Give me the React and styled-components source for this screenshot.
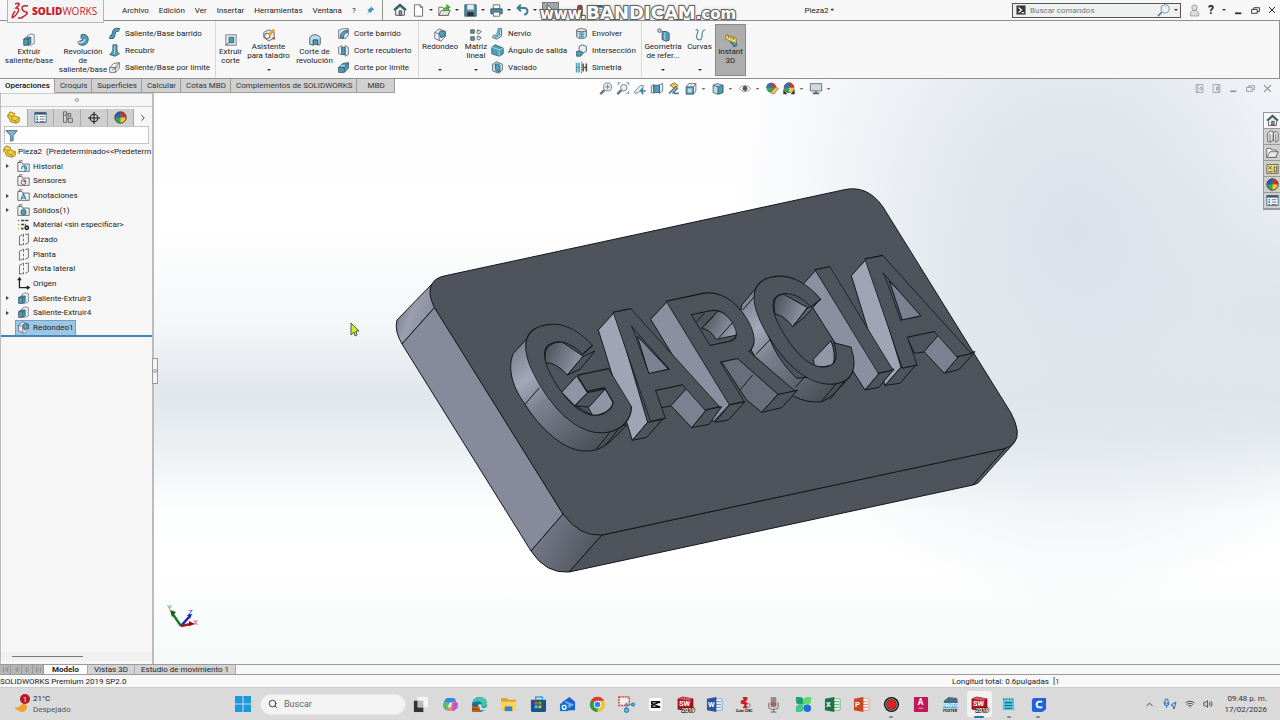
import styled, { createGlobalStyle, css } from 'styled-components'
import { FiSearch } from 'react-icons/fi'
import { LuVolume2, LuWifi, LuChevronUp, LuChevronRight } from 'react-icons/lu'

const GlobalStyle = createGlobalStyle`
  * {
    box-sizing: border-box;
  }

  body {
    margin: 0;
    font-family: Roboto, "Noto Sans", sans-serif;
    font-size: 8px;
    line-height: 9px;
    color: #222;
    overflow: hidden;
  }

  button, input {
    font: inherit;
    color: inherit;
    border: 0;
    padding: 0;
    margin: 0;
    background: none;
  }

  ul {
    list-style: none;
    margin: 0;
    padding: 0;
  }

  svg {
    display: block;
    flex-shrink: 0;
    overflow: visible;
  }
`

const Window = styled.div`
  display: flex;
  flex-direction: column;
  height: 100vh;
  background: #f7f7f7;
`

/* ---------- title bar ---------- */

const TitleBar = styled.header`
  position: relative;
  display: flex;
  align-items: center;
  height: 21px;
  flex-shrink: 0;
  border-bottom: 1px solid #8f8f8f;
`

const Logo = styled.div`
  position: relative;
  z-index: 1;
  align-self: flex-start;
  display: flex;
  align-items: center;
  gap: 3px;
  width: 97px;
  height: 23px;
  margin-left: 7px;
  padding: 0 3px;
  flex-shrink: 0;
  background: #f4f4f4;
  border: 1px solid #b5b5b5;
  border-top: 0;
  color: #c4242c;
  font-family: "Open Sans", sans-serif;
  font-size: 10px;
  white-space: nowrap;

  & b {
    font-weight: 800;
  }
`

const Menu = styled.nav`
  display: flex;
  align-items: center;
  gap: 10px;
  margin-left: 18px;
  padding-right: 7px;
  height: 20px;
  border-right: 1px solid #8f8f8f;
`

const QuickTools = styled.div`
  display: flex;
  align-items: center;
  gap: 5px;
  margin-left: 10px;
`

const QuickItem = styled.span`
  display: flex;
  align-items: center;
  gap: 4px;
`

const PlainButton = styled.button`
  display: flex;
  align-items: center;
  justify-content: center;
  white-space: nowrap;
`

const SelectTool = styled(PlainButton)`
  width: 17px;
  height: 17px;
  background: #a6a6a6;
  border: 1px solid #777;
`

const Watermark = styled.div`
  position: absolute;
  left: 540px;
  top: 4px;
  font-family: "DejaVu Sans", sans-serif;
  font-weight: 700;
  font-size: 15px;
  line-height: 18px;
  color: #fff;
  white-space: nowrap;
  -webkit-text-stroke: 2px #5c5c5c;
  paint-order: stroke fill;
  text-shadow: 0 0 3px #666;

  & span {
    font-size: 18px;
  }
`

const DocTitle = styled.span`
  position: absolute;
  left: 64%;
  transform: translateX(-50%);
`

const TitleRight = styled.div`
  display: flex;
  align-items: center;
  gap: 8px;
  margin-left: auto;
  padding-right: 4px;

  & > b {
    font-size: 12px;
  }
`

const CommandSearch = styled.label`
  display: flex;
  align-items: center;
  gap: 4px;
  width: 169px;
  height: 15px;
  padding: 0 2px 0 3px;
  background: #eef1f0;
  border: 1px solid #555;

  & input {
    flex: 1;
    min-width: 0;
    outline: 0;
  }

  & input::placeholder {
    color: #777;
    opacity: 1;
  }
`

/* ---------- ribbon ---------- */

const Ribbon = styled.section`
  display: flex;
  height: 58px;
  flex-shrink: 0;
  border-bottom: 1px solid #8f8f8f;
  border-right: 1px solid #8f8f8f;
`

const Group = styled.div`
  display: flex;
  padding: 3px 0 2px;

  & + & {
    border-left: 1px solid #d8d8d8;
  }
`

const BigButton = styled.button`
  display: flex;
  flex-direction: column;
  align-items: center;
  width: ${props => props.$width}px;
  padding-top: ${props => props.$menu ? 4 : 9}px;
  position: relative;
  white-space: pre-line;
  text-align: center;

  ${props => props.$active && css`
    background: #adadad;
    border: 1px solid #8a8a8a;
    padding-top: 8px;
  `}
`

const MenuArrow = styled.i`
  width: 0;
  height: 0;
  border: 2px solid transparent;
  border-top-color: #333;
  border-bottom-width: 0;
  ${props => props.$bottom && css`
    position: absolute;
    bottom: 5px;
  `}
`

const SmallList = styled.div`
  display: grid;
  grid-template-rows: repeat(3, 17px);
  width: ${props => props.$width}px;
  padding-top: 1px;
`

const SmallButton = styled.button`
  display: flex;
  align-items: center;
  gap: 4px;
  text-align: left;
  white-space: nowrap;
`

/* ---------- workspace ---------- */

const Workspace = styled.main`
  position: relative;
  display: flex;
  flex-direction: column;
  flex: 1;
  min-height: 0;
  overflow: hidden;
  background:
    radial-gradient(ellipse 340px 380px at 84% 26%, #dbe1ea 0%, #dee4ebcc 40%, transparent 100%),
    radial-gradient(ellipse 300px 160px at 100% 40%, #dfe4eb 0%, transparent 100%),
    linear-gradient(180deg, #fdfdfe 0%, #ffffff 25%, #f4f6f8 42%, #e2e7ec 54%, #ebeff2 62%, #fdfefe 74%, #fff 84%, #f4f9f8 100%);
`

const Tabs = styled.div`
  position: relative;
  z-index: 1;
  display: flex;
  align-self: flex-start;
  flex-shrink: 0;
  height: 14px;
`

const Tab = styled.button`
  padding: 0 ${props => props.$wide ? 9 : 4}px 0 ${props => props.$wide ? 10 : 5}px;
  white-space: nowrap;
  background: #d0d0d0;
  border: 1px solid #9b9b9b;
  border-width: 0 1px 1px 0;
  color: #333;

  ${props => props.$active && css`
    background: #f7f7f7;
    border-bottom-color: #f7f7f7;
    font-weight: 500;
    color: #111;
  `}
`

const Body = styled.div`
  display: flex;
  flex: 1;
  min-height: 0;
`

const SidePanel = styled.aside`
  position: relative;
  display: flex;
  flex-direction: column;
  width: 154px;
  flex-shrink: 0;
  background: #f6f6f6;
  border-left: 1px solid #bbb;
  border-right: 2px solid #bcbcbc;
`

const PanelGrip = styled.div`
  display: grid;
  place-items: center;
  height: 14px;
  margin-bottom: 2px;
  border-top: 1px solid #ccc;
  border-bottom: 1px solid #ccc;
`

const Dot = styled.i`
  width: 4px;
  height: 4px;
  border: 1px solid #999;
  border-radius: 50%;
`

const PanelTabs = styled.div`
  display: flex;
  height: 17px;
`

const PanelTab = styled.button`
  display: grid;
  place-items: center;
  width: ${props => props.$narrow ? 18 : 27}px;
  background: ${props => props.$active || props.$narrow ? '#f7f7f7' : '#cfcfcf'};
  border-right: ${props => props.$narrow ? 0 : 1}px solid #aaa;
`

const FilterBox = styled.label`
  display: flex;
  align-items: center;
  height: 18px;
  margin: 0 3px;
  background: #fff;
  border: 1px solid #c4c4c4;

  & input {
    flex: 1;
    min-width: 0;
    outline: 0;
  }
`

const RootNode = styled.div`
  display: flex;
  align-items: center;
  gap: 2px;
  height: 15px;
  padding-left: 2px;
  white-space: pre;
`

const Tree = styled.ul`
  display: grid;
  grid-template-rows: repeat(12, 1fr);
  height: 176px;
`

const TreeItem = styled.li`
  display: flex;
  align-items: center;
  gap: 7px;
  padding-left: 5px;
`

const Expand = styled.i`
  width: 3px;
  border: 2px solid transparent;
  border-left: 3px solid ${props => props.$shown ? '#444' : 'transparent'};
  border-right-width: 0;
`

const TreeLabel = styled.button`
  display: flex;
  align-items: center;
  gap: 3px;
  height: 14px;
  padding: 0 2px 0 1px;
  white-space: nowrap;

  ${props => props.$selected && css`
    background: #9ec5e2;
    box-shadow: 0 0 0 1px #6aa2c8;
  `}
`

const RollbackBar = styled.div`
  height: 2px;
  background: #3b87b8;
`

const PanelScroll = styled.div`
  height: 9px;
  margin-top: auto;
  margin-bottom: 3px;
  padding: 4px 69px 0 11px;
  background: #f0f0f0;

  &::before {
    content: '';
    display: block;
    height: 1px;
    background: #777;
  }
`

const Splitter = styled.div`
  position: absolute;
  left: 151px;
  top: 265px;
  display: grid;
  place-items: center;
  width: 6px;
  height: 26px;
  background: #f4f4f4;
  border: 1px solid #999;
`

const Viewport = styled.div`
  position: relative;
  flex: 1;
  min-width: 0;
`

const Scene = styled.svg`
  position: absolute;
  left: -154px;
  top: -93px;
  width: 1280px;
  height: 720px;
`

const HeadsUp = styled.div`
  position: absolute;
  z-index: 1;
  top: 3px;
  left: calc(50% + 76px);
  transform: translateX(-50%);
  display: flex;
  align-items: center;
  gap: 4px;
`

const DocControls = styled.div`
  position: absolute;
  z-index: 1;
  top: 5px;
  right: 8px;
  display: flex;
  gap: 8px;
`

const TaskPane = styled.div`
  position: absolute;
  z-index: 1;
  top: 33px;
  right: 0;
  display: grid;
  grid-template-rows: repeat(6, 16px);
  width: 17px;
  border: 1px solid #999;
  border-right: 0;

  & button {
    display: grid;
    place-items: center;
    background: #cfcfcf;
    border-bottom: 1px solid #999;
  }

  & button:first-child {
    background: #f7f7f7;
  }
`

/* ---------- bottom ---------- */

const BottomTabs = styled.div`
  display: flex;
  height: 11px;
  flex-shrink: 0;
  border-top: 1px solid #9a9a9a;
  border-bottom: 1px solid #9a9a9a;
`

const BottomTab = styled.button`
  padding: 0 ${props => props.$active ? 8 : 6}px;
  white-space: nowrap;
  background: ${props => props.$active ? '#fff' : '#d3d3d3'};
  font-weight: ${props => props.$active ? 700 : 400};
  border-right: 1px solid #aaa;
`

const NavButton = styled.button`
  display: grid;
  place-items: center;
  width: 11px;
  background: #b5b5b5;
  border-right: 1px solid #999;
`

const StatusBar = styled.footer`
  display: flex;
  align-items: center;
  height: 13px;
  flex-shrink: 0;
  background: #f8f8f8;
  border-bottom: 1px solid #ccc;

  & span:last-child {
    margin-left: auto;
    width: 328px;
    white-space: pre;
  }

  & em {
    color: #2b39a8;
    font-style: normal;
  }
`

const Taskbar = styled.footer`
  display: flex;
  align-items: center;
  height: 32px;
  flex-shrink: 0;
  background: #dadada;
`

const Weather = styled.div`
  display: flex;
  align-items: center;
  gap: 3px;
  width: 235px;
  padding-left: 12px;
  line-height: 11px;
  color: #555;

  & b {
    display: block;
    color: #222;
    font-weight: 400;
  }
`

const SearchPill = styled.label`
  display: flex;
  align-items: center;
  gap: 6px;
  width: 146px;
  height: 21px;
  margin-left: 9px;
  padding: 0 7px;
  background: #f3f3f3;
  border: 1px solid #e6e6e6;
  border-radius: 11px;
  font-size: 9px;

  & input {
    width: 100px;
    outline: 0;
  }

  & input::placeholder {
    color: #666;
    opacity: 1;
  }
`

const AppStrip = styled.div`
  display: grid;
  grid-template-columns: repeat(22, 1fr);
  width: 647px;
`

const AppButton = styled.button`
  position: relative;
  display: grid;
  place-items: center;
  height: 26px;
  margin: 0 2px;
  border-radius: 3px;
  background: ${props => props.$state === 'active' ? '#f1f1f1' : 'none'};

  ${props => props.$state && css`
    &::after {
      content: '';
      position: absolute;
      bottom: -1px;
      width: ${props.$state === 'active' ? 10 : 4}px;
      height: 2px;
      border-radius: 1px;
      background: ${props.$state === 'active' ? '#2675bb' : '#888'};
    }
  `}
`

const Tray = styled.div`
  display: flex;
  align-items: center;
  gap: 8px;
  margin-left: auto;
  padding-right: 13px;
  text-align: right;
  line-height: 11px;
  color: #333;

  & time {
    width: 46px;
    white-space: pre-line;
  }
`

/* ---------- icons ---------- */

const T = '#4aa0bd'
const L = '#b9dce8'
const D = '#3f5560'

const art = {
  extrude: <><path d='M6 3 10 1 14 2v10l-4 2-4-1z' fill='#e9eef0' stroke='#71808a' /><path d='M2 7 5 5h5v7l-3 2H2z' fill={T} stroke={D} /><path d='M2 7h5v7M7 7l3-2' stroke={D} fill='none' /></>,
  revolve: <><path d='M6 2c5-2 8 2 8 5s-2 7-7 7c-3 0-5-2-5-4l6-2c-2-2-3-3-2-6z' fill={T} stroke={D} /><path d='M2 10c2 2 7 1 8-3' stroke={L} strokeWidth='2' fill='none' /></>,
  sweep: <><path d='M2 12c6 2 4-4 6-7 1-2 4-2 6-1' stroke={D} strokeWidth='5' fill='none' /><path d='M2 12c6 2 4-4 6-7 1-2 4-2 6-1' stroke={T} strokeWidth='3' fill='none' /></>,
  loft: <><path d='M6 1h5v5c0 3 1 4 3 6l-5 3-7-2c2-2 4-4 4-7z' fill={T} stroke={D} /><path d='M8 2v11' stroke={L} /></>,
  boundary: <><path d='M2 8 7 3l7-1v7l-5 5H2z' fill='#eee' stroke='#666' /><path d='M2 8h7l5-6M9 8v6M5 11c3-3 4-1 7-4' stroke='#666' fill='none' /></>,
  cut: <><path d='M2 2h12v12H2z' fill='#dde5e8' stroke='#71808a' /><path d='M6 5h5v6H6z' fill={T} stroke={D} /><path d='M2 14 6 11' stroke={D} /></>,
  wizard: <><path d='M2 5 8 2l6 3v6l-6 4-6-4z' fill='#e6e6e6' stroke='#666' /><circle cx='6' cy='9' r='3' fill='#fff' stroke='#444' /><path d='M8 8 14 2' stroke='#e0a227' strokeWidth='3' /><path d='M12 12h3' stroke='#b33' strokeWidth='2' /></>,
  revcut: <><path d='M2 5c3-4 9-4 12 0v8l-3 1V8H6v6l-4-1z' fill={L} stroke={D} /><path d='M6 8h5v5H6z' fill={T} stroke={D} /></>,
  cutsweep: <><path d='M2 4 7 2h7v8l-3 4H2z' fill='#dfe8eb' stroke='#667' /><path d='M4 13c0-6 3-8 9-9v3c-4 0-5 3-5 7z' fill={T} stroke={D} /></>,
  cutloft: <><path d='M2 4 6 2v11l-4-1zM10 2l4 2v9l-4 2z' fill='#e6eaec' stroke='#667' /><path d='M6 4h4v9H6z' fill={T} stroke={D} /></>,
  cutbound: <><path d='M2 8 7 3l7-1v7l-5 5H2z' fill={T} stroke={D} /><path d='M2 8h7l5-6M9 8v6' stroke={D} fill='none' /><path d='M4 6h6' stroke='#fff' /></>,
  fillet: <><path d='M2 5 7 1l7 3v6l-5 5-7-3z' fill='#eef1f2' stroke='#667' /><path d='M7 6c0-3 3-3 7-2v5l-5 2z' fill={T} stroke={D} /><path d='M2 5l5 2v7' stroke='#667' fill='none' /></>,
  pattern: <g fill='#e4e4e4' stroke='#555'><path d='M2 2h4v4H2zM2 10h4v4H2z' fill={T} /><path d='m10 2 4 2-3 3-2-2zM10 9l4 2-3 3-2-2z' /></g>,
  rib: <><path d='M9 2h4v9l-6 4-5-2 1-3c4 1 5-3 6-8z' fill={L} stroke={D} /><path d='M10 3v6l-5 4' stroke={T} strokeWidth='2' fill='none' /></>,
  draft: <><path d='M1 4 5 1l10 4v7l-5 3-9-3z' fill={T} stroke={D} /><path d='m1 4 9 3 5-2M10 7v8' stroke={L} fill='none' /></>,
  shell: <><path d='M2 4 7 1l7 3v7l-5 4-7-3z' fill='#dce6ea' stroke={D} /><path d='M5 4c3-1 6 0 6 2v8l-5-2z' fill={T} stroke={D} /></>,
  wrap: <><ellipse cx='8' cy='4' rx='6' ry='2' fill='#eee' stroke='#555' /><path d='M2 4v8c2 3 10 3 12 0V4c-2 3-10 3-12 0z' fill={L} stroke='#555' /><path d='M5 9h6M5 12h6M8 7v6' stroke={T} strokeWidth='2' /></>,
  intersect: <><path d='M5 3 9 1l5 2v6l-4 2-5-2z' fill='#e5eef1' stroke={D} /><path d='M2 9h6l2 2-3 4H2z' fill={T} stroke={D} /></>,
  mirror: <><path d='M2 2v12M2 8h4M5 2v12' stroke={T} strokeWidth='2' fill='none' /><path d='M8 1v14' stroke='#555' strokeDasharray='2 1' /><path d='M10 3v10M10 8h3M14 3v10' fill='none' stroke='#555' strokeWidth='2' /></>,
  refgeo: <><path d='M7 4h5l3 2v8l-4 1-4-2z' fill={T} stroke={D} /><circle cx='4' cy='3' r='2' fill={L} stroke={D} /><path d='M10 5v9' stroke={L} /></>,
  curves: <path d='M3 2c6-1 0 6 1 9s5 4 6 0-1-8 4-9' stroke='#4b8aa8' fill='none' strokeWidth='1.4' />,
  ruler: <><path d='M2 2 14 6v6L2 7z' fill='#f1dd6b' stroke='#8a7420' /><path d='M5 3v3M8 4v3M11 5v3' stroke='#7a681b' /><path d='m7 10 6 5M14 15v-4M14 15h-4' stroke='#2f7ea3' strokeWidth='2' fill='none' /></>,
  part: <><path d='M1 5 4 1l5 2v3l6 2v5l-4 2-7-2-1-4-2-1z' fill='#f7d23f' stroke='#8c6b11' /><path d='m1 5 5 2 3-1M6 7v4l5 1 4-4M11 12v3' stroke='#a37f17' fill='none' /></>,
  props: <><path d='M1 2h14v12H1z' fill='#fff' stroke='#35607a' /><path d='M1 3h14' stroke='#35607a' strokeWidth='3' /><path d='M3 7h2M3 10h2M3 13h2' stroke='#2a86b0' strokeWidth='2' /><path d='M7 7h6M7 10h6M7 13h6' stroke='#555' /></>,
  config: <g fill='none' stroke='#555'><path d='M3 1h4v13H3zM3 5h4M9 3h3v4H9zM9 9h5v5H9zM7 3l2 2M7 8l2 3' /></g>,
  target: <g fill='none' stroke='#222' strokeWidth='1.5'><circle cx='8' cy='8' r='5' /><path d='M8 0v16M0 8h16' /></g>,
  ball: <><circle cx='8' cy='8' r='7' fill='#3aa655' /><path d='M8 8V1a7 7 0 0 1 7 7z' fill='#d9322c' /><path d='M8 8h7a7 7 0 0 1-7 7z' fill='#f4c531' /><path d='M8 8V1a7 7 0 0 0-7 7z' fill='#2d5fb8' /><circle cx='8' cy='8' r='7' fill='none' stroke='#333' /></>,
  appear: <><circle cx='7' cy='7' r='6' fill='#3aa655' /><path d='M7 7V1a6 6 0 0 1 6 6z' fill='#d9322c' /><path d='M7 7V1a6 6 0 0 0-6 6z' fill='#3a6bc4' /><path d='m6 13 7-7 3 2-6 7z' fill='#ecc56a' stroke='#a4731f' /></>,
  scene: <><circle cx='8' cy='7' r='6' fill='#3aa655' stroke='#444' /><path d='M8 7V1a6 6 0 0 1 6 6z' fill='#d9322c' /><path d='M8 7h6a6 6 0 0 1-6 6z' fill='#f4c531' /><path d='M8 7V1a6 6 0 0 0-6 6z' fill='#3a6bc4' /><path d='M1 15V9l5 6zM15 15V9l-5 6z' fill='#333' /></>,
  filter: <path d='M1 2h14L10 8v6l-3 1V8z' fill='#7fb7d4' stroke='#2c5570' />,
  folder: <path d='M1 3h5l1 2h8v9H1zM3 3V1h4' fill='#f2f2f2' stroke='#555' />,
  material: <><path d='M5 3h9M5 8h6M5 13h3' stroke='#444' strokeWidth='2' strokeDasharray='4 1' /><circle cx='2' cy='3' r='1' fill='#2a86b0' /><circle cx='2' cy='8' r='1' fill='#9a3' /><circle cx='2' cy='13' r='1' fill='#db3' /><circle cx='12' cy='12' r='2' fill='#fff' stroke='#222' strokeWidth='2' /></>,
  plane: <path d='M7 2 3 4v11l4-1M10 2l4-1v11l-4 2M8 1v4M8 7v3M8 12v3' fill='none' stroke='#555' />,
  origin: <path d='M3 2v11h11M1 4l2-3 2 3M12 11l3 2-3 2' fill='none' stroke='#222' strokeWidth='1.6' />,
  home: <><path d='M1 8 8 2l7 6' fill='none' stroke='#26566a' strokeWidth='2' /><path d='M3 8v6h10V8L8 4z' fill='#eef2f3' stroke='#444' /><path d='M7 9h3v5H7z' fill='#999' stroke='#444' /></>,
  doc: <path d='M3 1h7l3 3v11H3zM10 1v3h3' fill='#fff' stroke='#555' />,
  browse: <><path d='M1 3h5l1 2h6v9H1z' fill='#fff' stroke='#555' /><path d='M1 14 5 7h10l-3 7z' fill='#e8e8e8' stroke='#555' /></>,
  open: <><path d='M1 4h5l1 2h6v8H1z' fill='#fff' stroke='#555' /><path d='M1 14 4 8h11l-3 6z' fill='#dfe8df' stroke='#555' /><path d='M7 9c0-4 3-5 6-5M10 1l4 3-4 3' stroke='#53a52d' strokeWidth='2' fill='none' /></>,
  save: <><path d='M1 1h14v14H1z' fill='#4f8ca8' stroke='#31505f' /><path d='M4 1h8v6H4z' fill='#e8edef' /><path d='M4 10h8v5H4z' fill='#333' /></>,
  print: <><path d='M4 1h8v5H4z' fill='#fff' stroke='#555' /><path d='M1 6h14v6H1z' fill='#4f8ca8' stroke='#31505f' /><path d='M4 10h8v5H4z' fill='#fff' stroke='#555' /></>,
  undo: <path d='M4 5h6c6 0 5 8 0 8M6 1 2 5l4 4' fill='none' stroke='#3c7996' strokeWidth='2.4' />,
  rebuild: <><rect x='5' y='1' width='7' height='14' rx='3' fill='#555' /><circle cx='8' cy='5' r='3' fill='#c9302c' /></>,
  pin: <path d='m9 1 6 6-3 0-3 4 0 2-3-3-5 5 4-6-3-3 2 0 4-3z' fill='#3d94c4' />,
  arrow: <path d='M4 1v12l3-3 2 5 2-1-2-5h4z' fill='#fff' stroke='#444' />,
  zoomfit: <g fill='none' stroke='#67757d'><circle cx='10' cy='6' r='5' fill='#e4eef2' /><path d='m6 10-5 5' strokeWidth='3' /><path d='M7 6h6M10 3v6' /></g>,
  zoomarea: <g fill='none' stroke='#67757d'><circle cx='9' cy='7' r='4' fill='#e4eef2' /><path d='m6 10-5 5' strokeWidth='3' /><path d='M2 1h3M2 1v3M15 1h-3M15 1v3M15 14h-3M15 14v-3' /></g>,
  prev: <><path d='m1 12 8-8 4 1-7 8-4 1z' fill='#e4eef2' stroke='#67757d' /><path d='M15 11H9M12 8l-3 3 3 4' stroke='#3683a6' strokeWidth='2' fill='none' /></>,
  section: <><path d='M1 5 4 3v11l-3-1zM11 3l4-1v9l-4 3z' fill='#e4eef2' stroke='#55646c' /><path d='M4 4h7v9H4z' fill={T} stroke={D} /></>,
  dynview: <><path d='m3 4 5-3 5 3-4 4z' fill='#f0cf4a' stroke='#77641c' /><path d='m2 14 9-9M6 14l7-7M8 14h6' stroke='#5d7784' strokeWidth='2' /></>,
  orient: <><path d='m2 6 3-4h9l-3 4M14 2v9l-3 4' fill='#e4eef2' stroke='#55646c' /><path d='M2 6h9v9H2z' fill={T} stroke={D} /><path d='M4 8h5v5H4z' fill={L} /></>,
  style: <><path d='m2 4 5-2 7 2v9l-6 2-6-2z' fill={L} stroke={D} /><path d='m8 6 6-2v9l-6 2z' fill={T} stroke={D} /><path d='m2 4 6 2' stroke={D} fill='none' /></>,
  eye: <><path d='M1 8c4-5 10-5 14 0-4 5-10 5-14 0z' fill='#fff' stroke='#888' /><circle cx='8' cy='8' r='3' fill='#555' /></>,
  screen: <><path d='M1 2h14v9H1z' fill='#cfd8dc' stroke='#55646c' /><path d='M8 11v3M4 14h8' stroke='#55646c' strokeWidth='2' /></>,
  library: <g fill='#e8e8e8' stroke='#555'><path d='m2 4 4-3 3 1v10l-4 3-3-1zM9 3l4-1 2 2v9l-4 2M5 5v10M9 5v9M12 5v9' /></g>,
  palette: <><path d='M1 3h14v11H1z' fill='#f0dc7a' stroke='#555' /><path d='m3 5 4 4M7 5l-4 4M10 6h3v6h-3zM3 12h5' stroke='#444' fill='none' /></>,
  lens: <g fill='none'><circle cx='10' cy='6' r='5' stroke='#5f7fa4' /><path d='m6 10-5 5' stroke='#5f7fa4' strokeWidth='2' /></g>,
  prompt: <><path d='M1 1h14v14H1z' fill='#333' stroke='#777' /><path d='m4 4 5 4-5 4M9 12h4' stroke='#fff' strokeWidth='2' fill='none' /></>,
  user: <g fill='#ddd' stroke='#888'><circle cx='8' cy='4' r='4' /><path d='M2 16v-5l3-3h6l3 3v5z' /></g>,
  min: <path d='M2 13h11' stroke='currentColor' strokeWidth='3' />,
  restore: <path d='M5 6V3h10v7h-4M1 6h10v7H1z' fill='none' stroke='currentColor' strokeWidth='1.5' />,
  close: <path d='m2 2 12 12M14 2 2 14' stroke='currentColor' strokeWidth='2' />,
  dockleft: <path d='M2 1h12v14H2zM5 1v14M11 5v6L8 8z' fill='none' stroke='currentColor' strokeWidth='1.3' />,
  dockright: <path d='M2 1h12v14H2zM11 1v14M8 5v6l3-3z' fill='none' stroke='currentColor' strokeWidth='1.3' />
}

function Icon ({ name, size = 13 }) {
  return <svg width={size} height={size} viewBox='0 0 16 16' aria-hidden='true'>{art[name]}</svg>
}

function FolderIcon ({ mark }) {
  const marks = {
    history: <path d='M6 11a3 3 0 1 1 3 2M9 8v2h2' stroke='#2a86b0' strokeWidth='1.5' fill='none' />,
    sensor: <><circle cx='8' cy='10' r='3' fill='#fff' stroke='#444' /><path d='m8 10 2-2' stroke='#c33' strokeWidth='2' /></>,
    notes: <path d='m5 13 3-7 3 7M6 11h4' stroke='#2a86b0' strokeWidth='1.5' fill='none' />,
    solid: <path d='m5 8 3-2 3 2v4l-3 2-3-2z' fill={T} stroke={D} />
  }
  return <svg width='13' height='13' viewBox='0 0 16 16' aria-hidden='true'>{art.folder}{marks[mark]}</svg>
}

/* ---------- model ---------- */

const face = '#4f535c'

function Model () {
  return (
    <Scene viewBox='0 0 1280 720' role='img' aria-label='Pieza2'>
      <defs>
        <linearGradient id='cornerTop' x1='0' y1='0' x2='1' y2='.6'><stop offset='0' stopColor='#5d616c' /><stop offset='.5' stopColor='#9a9eaf' /><stop offset='1' stopColor='#868a9a' /></linearGradient>
        <linearGradient id='cornerLow' x1='0' y1='.3' x2='1' y2='.7'><stop offset='0' stopColor='#7b7f8e' /><stop offset='1' stopColor='#4c5059' /></linearGradient>
        <linearGradient id='round' x1='0' y1='0' x2='.75' y2='1'><stop offset='0' stopColor='#6f7380' /><stop offset='.3' stopColor='#a3a7b9' /><stop offset='.5' stopColor='#7d818f' /><stop offset='1' stopColor='#494d55' /></linearGradient>
        <linearGradient id='inner' x1='0' y1='0' x2='1' y2='.4'><stop offset='0' stopColor='#484c55' /><stop offset='1' stopColor='#9296a6' /></linearGradient>
      </defs>
      <g stroke='#15171c' strokeWidth='1' strokeLinejoin='round'>
        <path d='M435 307 402 344Q394 330 397 320L432 284Z' fill='url(#cornerTop)' />
        <path d='M435 307 563 514 531 551 402 344Z' fill='#868a9a' />
        <path d='M563 514 531 551Q546 574 569 572L602 535Z' fill='url(#cornerLow)' />
        <path d='M602 535 569 572 973 485 1006 448Z' fill={face} />
        <path d='M1006 448 973 485 978 483 1014 443Z' fill='#5d616b' />
        <path d='M434 307Q427 292 432 284 435 278 444 276L843 190Q867 184 883 207L1011 413Q1022 434 1014 443 1011 447 1003 449L602 535Q580 537 563 514Z' fill={face} />
      </g>
      {/* letter C, I and the last A, drawn at three times their size */}
      <g transform='translate(730 240) scale(.33333)' stroke='#15171c' strokeWidth='3' strokeLinejoin='round'>
        <path d='M260 88 210 143 405 450 450 397Z' fill='#8b8fa0' />
        <path d='M413 53 364 107 465 436 513 382Z' fill='#a0a4b5' />
        <path d='M450 397 492 387 447 442 405 450ZM513 382 557 375 510 430 465 436ZM690 345 735 335 688 388 643 400Z' fill={face} />
        <path d='M630 280 582 335 643 400 690 345Z' fill='#7c8191' />
        <path d='M535 300 553 340 582 336' fill='none' />
        <path d='M478 123 582 230 518 243Z' fill='#7c8191' />
        <path d='M125 180 190 258 228 205 246 205 308 302 250 358 305 385 330 390 200 380 120 260Z' fill={face} stroke='none' />
        <path d='M80 142 35 195Q20 260 60 323C90 380 140 450 190 468Q230 490 275 485 310 475 365 400L200 415Q110 330 95 200Z' fill='url(#round)' />
        <path d='M75 168 38 210M122 297 78 343M228 407 195 443M320 430 275 484M345 422 300 478' fill='none' />
        <path d='M132 200Q130 165 160 162L232 203 188 260Q165 228 135 222Z' fill='url(#inner)' />
        <path d='M230 207 268 180 230 225 188 260Z' fill='#5d616b' />
        <path d='M250 358 303 302Q318 340 310 375L255 385Z' fill='#9296a6' />
      </g>
      {/* letter G, the first A and R */}
      <g transform='translate(500 240) scale(.33333)' stroke='#15171c' strokeWidth='3' strokeLinejoin='round'>
        <path d='M503 183 452 238 640 545 690 493Z' fill='#8b8fa0' />
        <path d='M345 215 295 270 397 601 443 547Z' fill='#a0a4b5' />
        <path d='M443 547 488 538 440 592 397 601ZM620 508 665 500 627 553 575 563ZM690 493 735 485 685 540 645 547Z' fill={face} />
        <path d='M560 445 513 497 575 563 620 508Z' fill='#7c8191' />
        <path d='M468 463 485 503 513 498' fill='none' />
        <path d='M412 288 512 395 448 407Z' fill='#7c8191' />
        <path d='M655 350 720 450 740 480 785 517 835 462 700 340Z' fill='#6a6e7a' />
        <path d='M758 405 720 450' />
        <path d='M835 462 893 450 845 503 785 517Z' fill={face} />
        <path d='M655 212 605 265Q630 268 648 298L712 285 712 225Z' fill='url(#inner)' />
        <path d='M612 221 590 245M700 245 657 293M605 265 640 230' fill='none' />
        <path d='M82 295 40 340C15 400 55 465 75 493 120 565 190 630 250 633Q275 634 290 629 320 622 380 555L300 560Q160 520 100 380Z' fill='url(#round)' />
        <path d='M118 443 75 493M330 577 287 630M355 568 315 618' fill='none' />
        <path d='M135 350Q130 310 185 305L250 349 202 405Q170 368 137 368Z' fill='url(#inner)' />
        <path d='M248 350 285 333 240 388 202 405Z' fill={face} />
        <path d='M230 408 185 457 225 497 262 458Z' fill='#9094a4' />
        <path d='M262 458 316 447 270 502 225 497ZM225 497 275 525' fill={face} />
        <path d='M316 447 340 490 320 530 277 525 265 503Z' fill='#9094a4' />
      </g>
      <text
        transform='matrix(1.03 -.218 .919 1.506 568 439)'
        fontFamily='"Liberation Sans", sans-serif'
        fontWeight='700'
        fontSize='100'
        fill={face}
        stroke='#15171c'
        strokeWidth='.7'
      >GARCIA</text>
      <g strokeWidth='2.5'>
        <path d='m181 626-9-13' stroke='#1d7a28' />
        <path d='m181 626 8-9' stroke='#2020b0' />
        <path d='m181 626 10-2' stroke='#a81820' />
        <path d='m170 610 6 2-4 5z' fill='#165f1f' />
        <path d='m192 614-5 1 3 4z' fill='#2020b0' />
        <path d='m195 624-6-3v5z' fill='#8c1218' />
      </g>
      <g fontSize='8'>
        <text x='167' y='610' fill='#4ba456'>Y</text>
        <text x='188' y='615' fill='#3838c8'>Z</text>
        <text x='193' y='625' fill='#c84b52'>X</text>
      </g>
      <path d='M351 323v12l3-3 1 4 2-1-1-4h3z' fill='#c9ee2c' stroke='#333' strokeWidth='.8' />
    </Scene>
  )
}

/* ---------- taskbar icons ---------- */

const sw = (
  <>
    <path d='m1 3 5-2 11 2v10l-4 3-12-2z' fill='#b3121d' stroke='#5d0b10' strokeWidth='.6' />
    <path d='m1 3 11 2 5-2-11-2z' fill='#d8515a' />
    <text x='2' y='11' fontSize='8' fontWeight='700' fill='#fff'>SW</text>
    <text x='5' y='17' fontSize='6' fontWeight='700' fill='#fff' stroke='#222' strokeWidth='1.4' paintOrder='stroke'>2019</text>
  </>
)

const office = (color, light, letter) => (
  <>
    <path d='M8 3h9v12H8z' fill='#fff' stroke={light} />
    <path d='M10 6h6M10 9h6M10 12h6' stroke={light} strokeWidth='1.4' />
    <path d='m1 3 10-2v16L1 15z' fill={color} />
    <text x='2' y='12' fontSize='8' fontWeight='700' fill='#fff'>{letter}</text>
  </>
)

const apps = [
  ['Vista de tareas', <><path d='M2 5h10v12H2z' fill='#333' /><path d='M6 1h11v11H6z' fill='#f4f4f4' /><path d='M6 5h6v7H6z' fill='#bbb' /></>],
  ['Copilot', <><path d='M6 2h6q2 0 3 4l2 4q0 4-3 4h-2l-1-4-4-3z' fill='#e85fa8' /><path d='M6 2h6q2 0 2 3l-4 1-3 8q-1 2-4 0-3-3-1-7 1-5 4-5z' fill='#2c8de0' /><path d='M2 8q-1 5 2 5h3l1-4-3-4z' fill='#57c46a' /><path d='M7 16q-3 0-3-3h4l3-6h4q3 0 1 4-2 5-5 5z' fill='#f08a5a' /><path d='M11 7h4q3 0 1 4-2 5-5 5z' fill='#b45bd8' /><path d='m8 7 3 0-2 5-3 0z' fill='#e8e8e8' /></>],
  ['Edge', <><circle cx='9' cy='9' r='8' fill='#1672bf' /><path d='M1 8C3-1 18-1 17 8c0 4-6 4-6 2 2-5-6-6-10-2z' fill='#42c8a0' /><path d='M7 11c0-3 4-3 4-1 0 3 3 3 6 1-2 5-8 6-10 0z' fill='#dadada' /><path d='M1 11h8v6H1z' fill='#b66a1b' /><path d='M3 11v-1h4v1M1 14h8' stroke='#6e3c0b' fill='none' /></>],
  ['Explorador', <><path d='M1 2h6l2 2h8v12H1z' fill='#e0a425' /><path d='M1 6h16v10H1z' fill='#fbd458' /><path d='M5 11h8v5H5z' fill='#2e86cf' /></>],
  ['Store', <><path d='M6 4V1h7v3' fill='none' stroke='#3aa3e0' strokeWidth='1.5' /><path d='M1 4h16v11q0 2-2 2H3q-2 0-2-2z' fill='#17558f' /><path d='M5 6h3v3H5z' fill='#f25022' /><path d='M9 6h3v3H9z' fill='#7fba00' /><path d='M5 10h3v3H5z' fill='#4fc3f7' /><path d='M9 10h3v3H9z' fill='#ffb900' /></>],
  ['Outlook', <><path d='m3 7 8-6 6 5v9H3z' fill='#1f5fd0' /><path d='m6 5 10 4-6 4z' fill='#6db8f5' /><path d='M1 8h9v8H1z' fill='#1674d1' /><circle cx='5.5' cy='12' r='2' fill='none' stroke='#fff' strokeWidth='1.4' /></>],
  ['Chrome', <><circle cx='9' cy='9' r='8' fill='#f2c22e' /><path d='M9 9 2 5a8 8 0 0 1 14 0H9z' fill='#da3b2f' /><path d='M9 9 9 17A8 8 0 0 1 2 5z' fill='#2d9a48' /><circle cx='9' cy='9' r='4' fill='#fff' /><circle cx='9' cy='9' r='3' fill='#3c7fe8' /></>],
  ['Recortes', <><path d='M1 1h11v9H1z' fill='#f4eeee' stroke='#c0453a' strokeWidth='1.6' strokeDasharray='2 1' /><path d='M9 7v8M7 9h9' stroke='#7795a8' strokeWidth='1.5' /><circle cx='9' cy='15' r='2' fill='none' stroke='#2d8bc4' strokeWidth='1.5' /><circle cx='16' cy='9' r='1.5' fill='none' stroke='#2d8bc4' strokeWidth='1.5' /></>],
  ['CapCut', <><rect x='2' y='2' width='14' height='14' rx='3' fill='#fff' /><path d='M14 7 12 6H5v2l9 4M14 11l-2 1H5v-2l9-4' fill='none' stroke='#111' strokeWidth='1.6' /></>],
  ['SolidWorks 2019', sw],
  ['Word', office('#2b579a', '#7d9fd0', 'W')],
  ['Cute CNC', <><path d='M7 1h5v3l-2 2 3 2-1 5H7l2-4-4-1V5l3-1z' fill='#d21d23' /><circle cx='13' cy='10' r='2' fill='#ddd' stroke='#777' /><text x='0' y='17' fontSize='4' fontWeight='700' fill='#111'>Cute CNC</text></>],
  ['Grabadora', <><rect x='6' y='1' width='6' height='11' rx='1' fill='#8d8d8d' /><path d='M6 7h6v3H6z' fill='#c0523e' /><path d='M4 7v5q0 2 3 2h4q3 0 3-2V7M9 14v3M6 17h6' fill='none' stroke='#666' /></>],
  ['Filmora', <><path d='M1 1h4q4 0 4 4v4H5Q1 9 1 5z' fill='#1ca36c' /><path d='M17 1v4q0 4-4 4H9V5q0-4 4-4z' fill='#67d96b' /><path d='M1 17v-4q0-4 4-4h4v4q0 4-4 4z' fill='#3fc98a' /><circle cx='13' cy='13' r='4' fill='#1b6fe0' /></>],
  ['Excel', office('#1f7244', '#6cb68a', 'X')],
  ['PowerPoint', office('#c8472b', '#e49a86', 'P')],
  ['Bandicam', <><circle cx='9' cy='9' r='8' fill='#111' /><circle cx='9' cy='9' r='6' fill='none' stroke='#eee' strokeWidth='.8' /><circle cx='9' cy='9' r='5' fill='#e3201b' /></>, 'open'],
  ['Access', <><rect x='2' y='1' width='15' height='16' rx='1' fill='#c2185b' /><text x='6' y='10' fontSize='9' fontWeight='700' fill='#fff'>A</text><path d='M7 13h5' stroke='#f4a3c2' /></>],
  ['Proto Poster', <><path d='m2 5 5-4 9 1 1 6-15 1z' fill='#456c88' /><path d='M1 8h16v5H1z' fill='#51b1e6' /><text x='1' y='12' fontSize='5' fontWeight='700' fill='#fff'>PROTO</text><text x='1' y='17' fontSize='4' fontWeight='700' fill='#222'>POSTER</text></>],
  ['SolidWorks', sw, 'active'],
  ['Bloc de notas', <><path d='M3 3h12v14H3z' fill='#58c6dd' /><path d='M4 2v2M7 2v2M10 2v2M13 2v2' stroke='#356' /><path d='M5 7h8M5 10h8M5 13h8' stroke='#17677c' strokeWidth='1.2' /><path d='M3 16h12' stroke='#d8dde0' strokeWidth='2' /></>, 'open'],
  ['Camo', <><path d='M5 2h12v12l-4 3H5q-3 0-3-3V5q0-3 3-3z' fill='#2362dd' /><path d='M13 6h-3Q7 6 7 9t3 3h3' fill='none' stroke='#fff' strokeWidth='2' /></>, 'open']
]

const tree = [
  ['Historial', 'folder:history', true],
  ['Sensores', 'folder:sensor'],
  ['Anotaciones', 'folder:notes', true],
  ['Sólidos(1)', 'folder:solid', true],
  ['Material <sin especificar>', 'material'],
  ['Alzado', 'plane'],
  ['Planta', 'plane'],
  ['Vista lateral', 'plane'],
  ['Origen', 'origin'],
  ['Saliente-Extruir3', 'extrude', true],
  ['Saliente-Extruir4', 'extrude', true],
  ['Redondeo1', 'fillet']
]

function Big ({ icon, width, menu, active, children }) {
  return (
    <BigButton $width={width} $menu={menu} $active={active}>
      <Icon name={icon} size={14} />
      <span>{children}</span>
      {menu && <MenuArrow $bottom />}
    </BigButton>
  )
}

function Small ({ width, items }) {
  return (
    <SmallList $width={width}>
      {items.map(([icon, label]) => (
        <SmallButton key={label}><Icon name={icon} />{label}</SmallButton>
      ))}
    </SmallList>
  )
}

const GreyButton = styled(PlainButton)`
  color: #8d9194;
`

const HudButton = styled(PlainButton)`
  gap: 4px;
  margin-right: ${props => props.$menu ? 2 : 0}px;

  & i {
    border-top-color: #777;
  }
`

function HudItem ({ name }) {
  const menu = name.endsWith('+')
  return (
    <HudButton aria-label={name} $menu={menu}>
      <Icon name={name.replace('+', '')} />
      {menu && <MenuArrow />}
    </HudButton>
  )
}

export default function App () {
  return (
    <Window>
      <GlobalStyle />
      <TitleBar>
        <Logo>
          <svg width='18' height='18' viewBox='0 0 18 18' fill='none' stroke='#c4242c' strokeWidth='1.5' aria-hidden='true'>
            <path d='M4 2q5-2 4 1L5 6q4 0 2 4t-6 6M4 9q-3 4-3 7M17 4q-6-1-6 2t4 4-5 6H7' />
          </svg>
          <span><b>SOLID</b>WORKS</span>
        </Logo>
        <Menu>
          {['Archivo', 'Edición', 'Ver', 'Insertar', 'Herramientas', 'Ventana', '?'].map(item => (
            <PlainButton key={item}>{item}</PlainButton>
          ))}
          <PlainButton aria-label='Fijar'><Icon name='pin' size={9} /></PlainButton>
        </Menu>
        <QuickTools>
          <PlainButton aria-label='Inicio'><Icon name='home' size={14} /></PlainButton>
          {['doc', 'open', 'save', 'print', 'undo'].map(name => (
            <QuickItem key={name}>
              <PlainButton aria-label={name}><Icon name={name} /></PlainButton>
              <MenuArrow />
            </QuickItem>
          ))}
          <SelectTool aria-label='Seleccionar'><Icon name='arrow' /></SelectTool>
          <MenuArrow />
          <PlainButton aria-label='Reconstruir'><Icon name='rebuild' /></PlainButton>
          <PlainButton aria-label='Opciones'><Icon name='props' /></PlainButton>
        </QuickTools>
        <Watermark>www.<span>BANDICAM</span>.com</Watermark>
        <DocTitle>Pieza2 *</DocTitle>
        <TitleRight>
          <CommandSearch>
            <Icon name='prompt' size={10} />
            <input aria-label='Buscar comandos' placeholder='Buscar comandos' />
            <Icon name='lens' />
            <MenuArrow />
          </CommandSearch>
          <Icon name='user' size={11} />
          <b>?</b>
          <MenuArrow />
          <PlainButton aria-label='Minimizar'><Icon name='min' size={9} /></PlainButton>
          <PlainButton aria-label='Restaurar'><Icon name='restore' size={9} /></PlainButton>
          <PlainButton aria-label='Cerrar'><Icon name='close' size={8} /></PlainButton>
        </TitleRight>
      </TitleBar>

      <Ribbon>
        <Group>
          <Big icon='extrude' width={58}>{'Extruir\nsaliente/base'}</Big>
          <Big icon='revolve' width={50}>{'Revolución\nde\nsaliente/base'}</Big>
          <Small width={107} items={[['sweep', 'Saliente/Base barrido'], ['loft', 'Recubrir'], ['boundary', 'Saliente/Base por límite']]} />
        </Group>
        <Group>
          <Big icon='cut' width={29}>{'Extruir\ncorte'}</Big>
          <Big icon='wizard' width={47} menu>{'Asistente\npara taladro'}</Big>
          <Big icon='revcut' width={45}>{'Corte de\nrevolución'}</Big>
          <Small width={81} items={[['cutsweep', 'Corte barrido'], ['cutloft', 'Corte recubierto'], ['cutbound', 'Corte por límite']]} />
        </Group>
        <Group>
          <Big icon='fillet' width={42} menu>Redondeo</Big>
          <Big icon='pattern' width={30} menu>{'Matriz\nlineal'}</Big>
          <Small width={84} items={[['rib', 'Nervio'], ['draft', 'Ángulo de salida'], ['shell', 'Vaciado']]} />
          <Small width={66} items={[['wrap', 'Envolver'], ['intersect', 'Intersección'], ['mirror', 'Simetría']]} />
        </Group>
        <Group>
          <Big icon='refgeo' width={42} menu>{'Geometría\nde refer...'}</Big>
          <Big icon='curves' width={31} menu>Curvas</Big>
          <Big icon='ruler' width={31} active>{'Instant\n3D'}</Big>
        </Group>
      </Ribbon>

      <Workspace>
        <Tabs>
          <Tab $active>Operaciones</Tab>
          <Tab>Croquis</Tab>
          <Tab>Superficies</Tab>
          <Tab>Calcular</Tab>
          <Tab>Cotas MBD</Tab>
          <Tab>Complementos de SOLIDWORKS</Tab>
          <Tab $wide>MBD</Tab>
        </Tabs>
        <HeadsUp>
          {['zoomfit', 'zoomarea', 'prev', 'section', 'dynview', 'orient+', 'style+', 'eye+', 'appear', 'scene+', 'screen+'].map(name => (
            <HudItem key={name} name={name} />
          ))}
        </HeadsUp>
        <DocControls>
          {['dockleft', 'dockright', 'min', 'restore', 'close'].map(name => (
            <GreyButton key={name} aria-label={name}><Icon name={name} size={9} /></GreyButton>
          ))}
        </DocControls>
        <TaskPane>
          {['home', 'library', 'browse', 'palette', 'ball', 'props'].map(name => (
            <button key={name} aria-label={name}><Icon name={name} /></button>
          ))}
        </TaskPane>
        <Body>
          <SidePanel>
            <PanelGrip><Dot /></PanelGrip>
            <PanelTabs>
              <PanelTab $active aria-label='Árbol'><Icon name='part' /></PanelTab>
              <PanelTab aria-label='Propiedades'><Icon name='props' /></PanelTab>
              <PanelTab aria-label='Configuraciones'><Icon name='config' /></PanelTab>
              <PanelTab aria-label='Cotas'><Icon name='target' size={12} /></PanelTab>
              <PanelTab aria-label='Apariencias'><Icon name='ball' /></PanelTab>
              <PanelTab $narrow aria-label='Más'><LuChevronRight size={10} /></PanelTab>
            </PanelTabs>
            <FilterBox><Icon name='filter' /><input aria-label='Filtro' /></FilterBox>
            <RootNode><Icon name='part' />{'Pieza2  (Predeterminado<<Predeterm'}</RootNode>
            <Tree>
              {tree.map(([label, icon, open]) => (
                <TreeItem key={label}>
                  <Expand $shown={open} />
                  <TreeLabel $selected={label === 'Redondeo1'}>
                    {icon.startsWith('folder') ? <FolderIcon mark={icon.split(':')[1]} /> : <Icon name={icon} />}
                    {label}
                  </TreeLabel>
                </TreeItem>
              ))}
            </Tree>
            <RollbackBar />
            <PanelScroll />
            <Splitter><Dot /></Splitter>
          </SidePanel>
          <Viewport>
            <Model />
          </Viewport>
        </Body>
      </Workspace>

      <BottomTabs>
        {['M3 3v10M13 3 7 8l6 5z', 'M11 3 5 8l6 5z', 'm5 3 6 5-6 5z', 'M13 3v10M3 3l6 5-6 5z'].map(d => (
          <NavButton key={d} aria-label='Desplazar'>
            <svg width='7' height='7' viewBox='0 0 16 16' fill='none' stroke='#888' strokeWidth='2'><path d={d} /></svg>
          </NavButton>
        ))}
        <BottomTab $active>Modelo</BottomTab>
        <BottomTab>Vistas 3D</BottomTab>
        <BottomTab>Estudio de movimiento 1</BottomTab>
      </BottomTabs>
      <StatusBar>
        <span>SOLIDWORKS Premium 2019 SP2.0</span>
        <span>Longitud total: 0.6pulgadas  [<em>1</em></span>
      </StatusBar>
      <Taskbar>
        <Weather>
          <svg width='18' height='20' viewBox='0 0 18 20' aria-hidden='true'>
            <path d='M2 13q6 2 9-5 6 3 3 8-5 5-12-3z' fill='#f0a030' />
            <circle cx='13' cy='5' r='5' fill='#b9191f' />
            <text x='11' y='8' fontSize='7' fill='#fff'>1</text>
          </svg>
          <span><b>21°C</b>Despejado</span>
        </Weather>
        <PlainButton aria-label='Inicio de Windows'>
          <svg width='16' height='16' viewBox='0 0 16 16'><path d='M0 0h7.5v7.5H0zM8.5 0H16v7.5H8.5zM0 8.5h7.5V16H0zM8.5 8.5H16V16H8.5z' fill='#1c9ae0' /></svg>
        </PlainButton>
        <SearchPill>
          <FiSearch size={10} />
          <input aria-label='Buscar' placeholder='Buscar' />
        </SearchPill>
        <AppStrip>
          {apps.map(([name, drawing, state]) => (
            <AppButton key={name} aria-label={name} $state={state}>
              <svg width='17' height='17' viewBox='0 0 18 18'>{drawing}</svg>
            </AppButton>
          ))}
        </AppStrip>
        <Tray>
          <LuChevronUp size={11} />
          <svg width='14' height='12' viewBox='0 0 14 12' fill='none' stroke='#2f6db5' aria-hidden='true'>
            <rect x='2' y='1' width='3' height='5' rx='1' /><path d='M1 4q0 4 2.5 4T6 4M3.5 8v2M13 4 8 7l2 1 1 3z' />
          </svg>
          <LuWifi size={10} />
          <LuVolume2 size={10} />
          <time>{'09:48 p. m.\n17/02/2026'}</time>
        </Tray>
      </Taskbar>
    </Window>
  )
}
